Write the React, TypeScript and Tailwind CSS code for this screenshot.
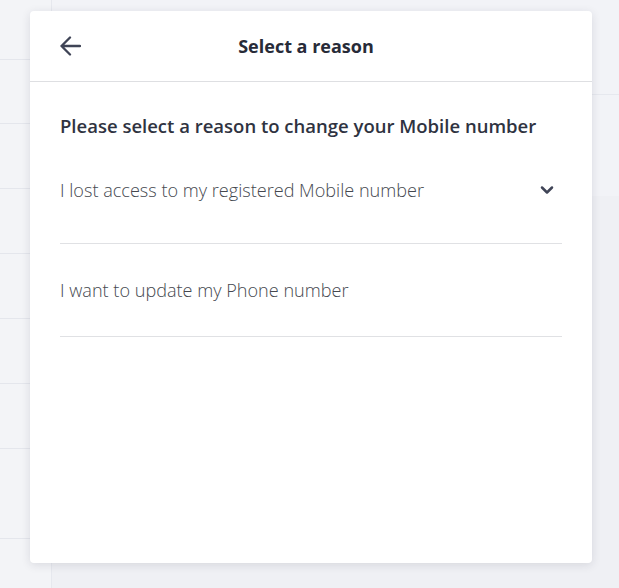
import { ChevronDown } from 'lucide-react';

const leftRows = [60, 64, 65, 65, 65, 65, 65, 90];

const reasons = [
    { label: 'I lost access to my registered Mobile number', open: true },
    { label: 'I want to update my Phone number', open: false },
];

export default function App() {
    return (
        <div
            className="relative h-[588px] w-[619px] overflow-hidden bg-[#f2f3f7]"
            style={{ fontFamily: '"Open Sans", "Noto Sans", sans-serif' }}
        >
            {/* page behind the dialog */}
            <div className="flex h-full">
                <div className="flex w-[52px] flex-col border-r border-[#e6e8ee] bg-[#f3f4f7]">
                    {leftRows.map((h, i) => (
                        <div
                            key={i}
                            className="shrink-0 border-b border-[#e4e6ec]"
                            style={{ height: h }}
                        />
                    ))}
                </div>
                <div className="flex flex-1 flex-col">
                    <div className="h-[95px] border-b border-[#e6e8ee]" />
                    <div className="h-[101px]" />
                    <div className="flex-1 bg-[#eff0f4]" />
                </div>
            </div>

            {/* dialog */}
            <div className="absolute left-[30px] top-[11px] flex h-[552px] w-[562px] flex-col rounded-[4px] bg-white shadow-[0_2px_10px_rgba(30,35,60,0.12)]">
                <div className="relative flex h-[71px] shrink-0 items-center border-b border-[#dedfe2] px-[30px]">
                    <svg
                        width="21"
                        height="20"
                        viewBox="0 0 21 20"
                        fill="none"
                        stroke="#3f4456"
                        strokeWidth="2.3"
                        strokeLinecap="round"
                        strokeLinejoin="round"
                    >
                        <path d="M20 10H1.5M10 1.5L1.5 10l8.5 8.5" />
                    </svg>
                    <h1 className="absolute inset-x-0 pr-[10px] text-center text-[18px] leading-[24px] font-bold text-[#272b38]">
                        Select a reason
                    </h1>
                </div>

                <div className="px-[30px] pt-[32px]">
                    <p className="text-[18.5px] leading-[24px] font-semibold text-[#2f3341]">
                        Please select a reason to change your Mobile number
                    </p>

                    <div className="flex flex-col">
                        {reasons.map((r, i) => (
                            <div
                                key={r.label}
                                className={`flex items-center justify-between border-b border-[#e0e1e4] ${
                                    i === 0 ? 'pt-[40px] pb-[41px]' : 'pt-[34px] pb-[34px]'
                                }`}
                            >
                                <span className="text-[18.1px] leading-[24px] font-light text-[#45484f]">
                                    {r.label}
                                </span>
                                {r.open && (
                                    <ChevronDown
                                        className="mr-[5px] h-[20px] w-[20px] text-[#3f4456]"
                                        strokeWidth={3}
                                    />
                                )}
                            </div>
                        ))}
                    </div>
                </div>
            </div>
        </div>
    );
}
